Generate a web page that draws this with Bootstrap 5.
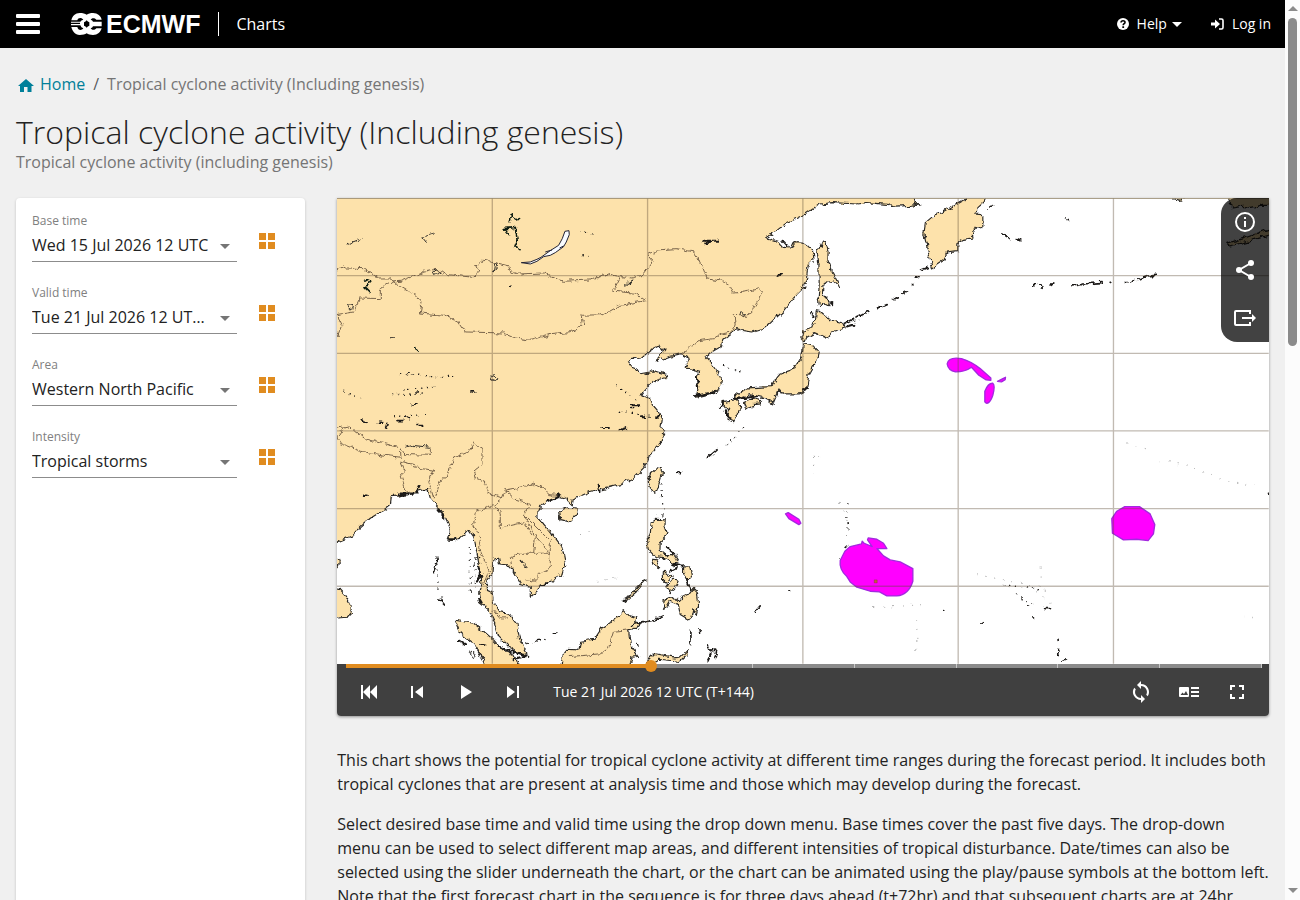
<!DOCTYPE html>
<html lang="en">
<head>
<meta charset="utf-8">
<meta name="viewport" content="width=device-width, initial-scale=1">
<title>Tropical cyclone activity (Including genesis) | ECMWF Charts</title>
<link rel="stylesheet" href="https://cdn.jsdelivr.net/npm/bootstrap@5.3.0/dist/css/bootstrap.min.css">
<style>
body{font-family:"Open Sans","Noto Sans",sans-serif;font-size:16px;line-height:24px;color:#222;background:#f0f0f0}
.shell{height:100vh}
.page{overflow:hidden auto;min-width:0;scrollbar-width:none}
.page::-webkit-scrollbar{display:none}
.topbar{height:48px;background:#000;padding:0 14px 0 16px}
.topbar a,.topbar button{color:#fff;text-decoration:none}
.topbar .btn{font-size:14px;line-height:24px;border:0;border-radius:0}
.logo-word{font:bold 25px/24px "Liberation Sans",Arial,sans-serif}
.app-name{border-left:1px solid #fff;padding-left:17px;margin-left:18px}
.crumbs{padding-top:24px;--bs-breadcrumb-divider-color:#757575;--bs-breadcrumb-item-active-color:#757575}
.crumbs .active{color:#757575}
.crumbs a{color:#007f99;text-decoration:none}
.page-title{font-size:32px;font-weight:300;line-height:40px;margin:16px 0 0}
.subtitle{color:#757575;line-height:20px;margin-bottom:26px}
.content-row{--bs-gutter-x:32px}
.filters{background:#fff;border-radius:4px 4px 0 0;padding:11px 16px;min-height:900px;box-shadow:0 1px 3px #0003}
.field{height:72px}
.field label{display:block;font-size:12px;line-height:24px;color:#808080}
.field select{appearance:none;display:block;width:100%;height:29px;padding:0 28px 4px 0;border:0;border-bottom:1px solid #8c8c8c;border-radius:0;color:#222;font:16px/24px "Open Sans","Noto Sans",sans-serif;text-overflow:ellipsis;overflow:hidden;white-space:nowrap;
background:#fff url("data:image/svg+xml,%3Csvg xmlns='http://www.w3.org/2000/svg' width='10' height='5'%3E%3Cpath d='M0 0h10L5 5z' fill='%23757575'/%3E%3C/svg%3E") no-repeat right 7px top 11px}
.select-box{flex:0 1 205px;min-width:0}
.grid-btn{width:32px;height:32px;margin:14px 0 0 14px}
.map-side{top:0;right:0;width:48px;background:#000000bd;border-radius:16px 0 0 16px}
.map-side .btn,.player .btn{width:48px;height:48px;padding:0;border:0;color:#fff;border-radius:0}
.viewer{box-shadow:0 1px 3px #0006;border-radius:0 0 4px 4px;overflow:hidden}
.viewer .chart{background:#fff;aspect-ratio:2}
.player{background:#404040;color:#fff;height:52px;font-size:14px}
.time-slider{appearance:none;display:block;width:calc(100% - 4px);height:4px;margin:0 1px 0 3px;background:none;position:relative}
.time-slider::-webkit-slider-runnable-track{height:4px;background:
linear-gradient(to right,#e08c20 33.33%,transparent 0) center/calc(100% - 12px) 4px no-repeat,
repeating-linear-gradient(to right,#8b8b8b 0 calc(100%/9 - 1px),#c8c8c8 calc(100%/9 - 1px) calc(100%/9)) center/calc(100% - 12px) 4px no-repeat}
.time-slider::-webkit-slider-thumb{appearance:none;width:12px;height:12px;margin-top:-4px;border-radius:50%;background:#e08c20}
.about{padding-top:32px}
.scroller{width:15px;background:#fcfcfc}
.scroll-thumb{width:9px;height:328px;background:#8b8b8b;border-radius:5px;margin-top:7px}
.tri{border:5px solid transparent}
.tri-up{border-bottom-color:#8b8b8b;border-top:0;margin-top:6px}
.tri-down{border-top-color:#8b8b8b;border-bottom:0;margin-bottom:7px}
</style>
</head>
<body>
<div class="shell d-flex overflow-hidden">
<div class="page flex-grow-1">
<header class="topbar d-flex align-items-center">
  <button class="btn p-0 me-4" type="button" aria-label="Menu"><svg class="d-block" width="24" height="20" fill="#fff"><rect width="24" height="4" rx="1"/><rect y="8" width="24" height="4" rx="1"/><rect y="16" width="24" height="4" rx="1"/></svg></button>
  <a class="d-flex align-items-center ms-2 ps-0" href="#" aria-label="ECMWF">
    <svg class="flex-shrink-0 me-1" style="margin-left:-1px" width="31" height="22" viewBox="0 0 93 66"><path d="M26 0C36 0 42 2 47 5C52 2 58 0 66 0C80 0 90 9 92 20H76C70 13 61 15 59 20Q65 21 66 26H92V40H66Q65 45 59 46C61 51 70 53 76 46H92C89 57 80 66 66 66C58 66 52 64 47 61C42 64 36 66 26 66C12 66 4 54 1 42H19C21 52 31 54 37 46Q30 44 28 37H0V33H27V29H0V26H28Q30 21 37 20C31 12 21 14 19 22H1C4 9 13 0 26 0ZM47 22Q44 27 39 28V38Q44 39 47 44Q50 39 55 38V28Q50 27 47 22Z" fill="#fff" fill-rule="evenodd"/></svg>
    <span class="logo-word">ECMWF</span></a>
  <a class="app-name" href="#">Charts</a>
  <button class="btn d-flex align-items-center ms-auto p-0" type="button"><svg class="me-2" width="12" height="12" viewBox="0 0 12 12"><circle cx="6" cy="6" r="6" fill="#fff"/><path d="M4 4.500C4.200 2 8.100 2.200 8 4.400C8 5.700 6.200 5.800 6.200 7.200M5.300 9.100h1.800" fill="none" stroke="#000" stroke-width="1.600"/></svg>Help<svg class="ms-1" width="12" height="5"><path d="M1 0h10L6 5z" fill="#fff"/></svg></button>
  <a class="btn d-flex align-items-center p-0 ms-4" href="#"><svg class="ms-1 me-2" width="13" height="12" viewBox="0 0 13 12"><path d="M0 4.500h4V1.500L9 6l-5 4.500v-3H0z" fill="#fff"/><path d="M8 1h2.500Q12 1 12 2.500v7Q12 11 10.500 11H8" fill="none" stroke="#fff" stroke-width="1.600"/></svg>Log in</a>
</header>

<main class="px-3">
  <nav class="crumbs" aria-label="breadcrumb"><ol class="breadcrumb mb-0">
    <li class="breadcrumb-item"><a class="d-flex align-items-center" href="#"><svg class="me-1" width="20" height="16" viewBox="0 0 20 16"><path d="M10 3L18 10H15.500V16H11.500V11H8V16H4V10H2Z" fill="#007f99"/></svg>Home</a></li>
    <li class="breadcrumb-item active" aria-current="page">Tropical cyclone activity (Including genesis)</li></ol></nav>
  <h1 class="page-title">Tropical cyclone activity (Including genesis)</h1>
  <p class="subtitle">Tropical cyclone activity (including genesis)</p>

  <div class="row content-row">
    <aside class="col-3"><form class="filters">
      <div class="field d-flex"><div class="select-box"><label for="base">Base time</label><select id="base"><option>Wed 15 Jul 2026 12 UTC</option></select></div><button class="btn p-0 border-0 grid-btn" type="button" aria-label="All base times"><svg width="16" height="16" fill="#e08c20"><path d="M0 0h7v7H0zM9 0h7v7H9zM0 9h7v7H0zM9 9h7v7H9z"/></svg></button></div>
      <div class="field d-flex"><div class="select-box"><label for="valid">Valid time</label><select id="valid"><option>Tue 21 Jul 2026 12 UTC (T+144)</option></select></div><button class="btn p-0 border-0 grid-btn" type="button" aria-label="All valid times"><svg width="16" height="16" fill="#e08c20"><path d="M0 0h7v7H0zM9 0h7v7H9zM0 9h7v7H0zM9 9h7v7H9z"/></svg></button></div>
      <div class="field d-flex"><div class="select-box"><label for="area">Area</label><select id="area"><option>Western North Pacific</option></select></div><button class="btn p-0 border-0 grid-btn" type="button" aria-label="All areas"><svg width="16" height="16" fill="#e08c20"><path d="M0 0h7v7H0zM9 0h7v7H9zM0 9h7v7H0zM9 9h7v7H9z"/></svg></button></div>
      <div class="field d-flex"><div class="select-box"><label for="intensity">Intensity</label><select id="intensity"><option>Tropical storms</option></select></div><button class="btn p-0 border-0 grid-btn" type="button" aria-label="All intensities"><svg width="16" height="16" fill="#e08c20"><path d="M0 0h7v7H0zM9 0h7v7H9zM0 9h7v7H0zM9 9h7v7H9z"/></svg></button></div>
    </form></aside>

    <section class="col-9">
      <div class="viewer position-relative">
        <svg class="chart d-block w-100" viewBox="0 0 2796 1398" role="img" aria-label="Map of the Western North Pacific">
          <defs><filter id="rough" x="0" y="0" width="2796" height="1398" filterUnits="userSpaceOnUse" color-interpolation-filters="sRGB"><feTurbulence type="fractalNoise" baseFrequency=".055" numOctaves="3" seed="4"/><feDisplacementMap in="SourceGraphic" scale="18" xChannelSelector="R" yChannelSelector="G"/></filter></defs>
          <g filter="url(#rough)" stroke-linejoin="round" stroke-linecap="round">
          <g fill="#fde2ab" stroke="#2b2925" stroke-width="3.500">
            <!-- mainland Asia -->
            <path d="M-20-20H1730L1739 15 1749 18 1720 22 1665 25 1659 20 1589 14 1559 18 1489 14 1449 18 1389 58 1349 75 1319 98 1289 120 1324 130 1339 148 1364 150 1371 134 1399 135 1414 145 1429 160 1431 185 1414 200 1409 240 1399 270 1379 290 1339 340 1284 390 1244 402 1219 398 1199 392 1179 410 1159 425 1154 445 1119 465 1104 478 1129 505 1149 535 1154 560 1144 578 1109 590 1079 598 1084 570 1079 540 1089 520 1059 512 1044 510 1057 480 1034 467 999 475 961 490 967 475 984 455 964 445 939 458 914 480 884 485 874 493 884 508 904 515 914 530 939 525 949 518 994 530 984 540 949 550 924 575 914 590 934 600 949 625 974 655 969 690 984 700 964 746 934 776 924 806 889 841 849 861 789 876 749 886 709 904 706 921 685 901 660 894 630 908 603 934 603 958 640 1001 675 1046 685 1096 675 1131 640 1151 615 1166 580 1198 580 1166 550 1156 530 1121 510 1101 488 1098 485 1084 468 1086 465 1126 450 1146 448 1176 465 1184 470 1216 485 1241 515 1246 540 1276 548 1326 570 1366 555 1371 515 1346 485 1316 470 1266 455 1236 428 1214 425 1186 435 1156 430 1116 420 1066 410 1016 395 996 385 1008 360 1028 330 1026 340 996 325 956 300 926 280 901 272 871 240 881 190 894 163 896 160 921 140 936 100 961 60 996 45 1014 5 1031-20 1056Z"/>
            <path d="M-20 1055Q15 1085 4 1105L-20 1130M-20 1170L10 1175 25 1192 42 1225 43 1245 30 1258-20 1262"/>
            <path d="M668 940L690 930 722 934 718 950 695 974 672 968ZM934 850L942 826 960 810 976 812 976 830 960 880 950 886 938 870Z"/>
            <!-- Sumatra and Borneo -->
            <path d="M353 1267L410 1276 440 1300 470 1326 490 1350 530 1370 550 1410H450L440 1386 410 1336 370 1306ZM672 1410L676 1370 690 1354 726 1356 731 1330 772 1324 795 1290 830 1268 862 1235 880 1254 900 1260 896 1272 915 1276 900 1290 875 1296 880 1340 905 1376 885 1378 875 1410ZM929 1390L950 1370 1010 1380 1030 1378 1053 1355 1050 1370 1028 1391 1000 1388 965 1384 940 1400Z"/>
            <!-- Philippines -->
            <path d="M943 970L955 964 985 966 984 984 990 1000 984 1016 970 1030 969 1056 985 1070 1010 1070 1023 1090 1018 1098 985 1080 955 1076 935 1056 928 1022 940 1010ZM944 1084L960 1086 968 1106 960 1112ZM979 1122L1003 1134 992 1152 980 1150ZM1040 1104L1058 1104 1064 1136 1050 1150 1040 1130ZM989 1168L1008 1144 1025 1146 1012 1176 1000 1184ZM1030 1202L1058 1188 1070 1172 1082 1186 1085 1220 1078 1250 1068 1232 1060 1268 1030 1250 1024 1220 1000 1210 985 1234 979 1230 986 1202 1010 1196 1022 1210ZM920 1150L928 1146 900 1180 864 1212 870 1200Z"/>
            <!-- Japan and Sakhalin -->
            <path d="M1439 150L1452 150 1460 132 1467 134 1474 160 1473 184 1486 220 1500 248 1508 266 1490 250 1474 248 1458 262 1457 290 1480 312 1478 324 1460 314 1448 325 1444 304 1447 260 1446 196ZM1438 338L1450 340 1480 366 1520 374 1525 390 1489 400 1474 420 1435 404 1410 418 1404 430 1395 418 1398 400 1428 390 1436 368ZM1400 438L1430 444 1444 466 1440 484 1431 504 1416 530 1412 556 1408 576 1384 588 1335 588 1326 576 1308 618 1284 600 1240 590 1190 608 1200 590 1232 570 1304 566 1320 540 1330 528 1374 512 1394 480ZM1220 614L1250 602 1274 608 1270 618 1248 620 1228 634ZM1155 614L1196 608 1212 626 1190 672 1170 664 1176 640Z"/>
            <!-- Kamchatka -->
            <path d="M1900-10L1876 10 1820 42 1794 50 1766 74 1761 108 1776 170 1787 210 1822 186 1830 162 1863 158 1863 134 1880 124 1912 120 1908 100 1916 86 1938 90 1938 50 1914 48 1924 28 1942 12 1946-10ZM2510 0L2530 4 2550-5M2675-10L2678 20 2690 30 2720 25 2745 28 2770 22 2810 22V-10ZM2670 136L2730 118 2800 92V110L2740 128 2680 144Z"/>
            <g fill="none">
              <path stroke="#0a1a10" stroke-width="5" d="M502 92L535 88 541 130 534 148 546 158M504 96L518 112M519 68L524 52 545 66M82 242L98 250 92 262 84 266 100 282M236 448L240 460"/>
              <path stroke-width="3" d="M255 118L290 108M255 120L268 136M30 138L75 122M287 222l10-8 12 10-16 7zM474 198l9-3-4 20-8 3zM460 535l12-5 12 10-8 8-14-5zM1210 344l16 4-10 12-8-9zM32 320l14 3-2 10-8-5zM864 262l20-16-4 10-12 8zM206 748L224 742 278 748M553 1090l18 16-8 4zM398 1364l10-4 10 18-8 6z"/>
            </g>
          </g>
          <!-- borders -->
          <path fill="none" stroke="#77634a" stroke-width="3" d="M0 215L20 204 30 210 80 212 125 240 155 240 165 252 190 250 225 236 260 220 290 214 335 230 410 238 425 225 416 205 440 184 515 204 520 220 545 228 620 225 650 240 680 250 760 246 810 228 850 236 885 240 915 232 948 188 934 170 960 156 1020 152 1070 162 1092 195 1110 240 1150 246 1180 265 1190 286 1235 280 1268 272 1276 282 1262 304 1250 335 1230 355 1192 352 1195 380 1185 402 1150 408 1130 422 1090 428 1060 448 1034 467M165 252L185 260 235 290 255 315 250 345 320 352 365 372 385 402 500 405 535 420 580 427 640 410 700 404 740 378 735 352 800 350 850 322 925 308 900 286 830 280 850 240M155 255L130 272 130 302 70 300 50 342 0 350 15 380 0 418M0 690L30 685 60 700 90 724 190 750 192 778 140 772 70 760 10 736 0 720 20 690M190 750L205 770 280 772 280 750M192 790L230 800 230 810 290 816 275 850 290 900M192 790L205 820 192 832 208 882M295 900L312 840 330 840 350 780 395 762 410 735 435 752 435 800 410 820 415 840 440 850 455 886 495 900 505 876 560 866 590 856 625 872 635 890 660 892M495 900L470 920 415 942 410 980 430 1020 425 1046 455 1120 440 1160M470 920L490 945 490 990 560 974 595 1020 590 1066 640 1066 600 1020 560 950 580 920 540 908 505 878M560 950L640 1030 640 1110 600 1130 600 1150 570 1146M525 1110L520 1080 545 1066 590 1066M470 1236L490 1260 515 1260M700 1376L790 1368 815 1350 830 1300 875 1296"/>
          </g>
          <!-- Lake Baikal -->
          <path fill="#f8fbff" stroke="#223" stroke-width="3" stroke-linejoin="round" d="M553 194L580 192 600 184 612 178 640 158 665 142 676 122 684 100 696 98 697 110 688 132 680 146 655 164 640 172 620 176 600 190 580 198ZM625 162l20-6M668 150l12-6"/>
          <!-- small islands and lakes -->
          <g filter="url(#rough)" fill="none" stroke="#1c1a18" stroke-linecap="round">
            <path stroke-width="6" d="M186 890h26M220 884h20l8-20M262 876l8-4M336 1024h20M302 934l18 18 2 12M425 1110l8 20-10 18M426 1200l8 14M300 1086l-6 20-4 18M310 1205l10 10M484 1346l60 20 30 14M530 1384l40-12M1158 616l-12 14M1166 640l12 24M1074 594l58-12M1190 604l70-8M1080 540l4 30M1398 574h12M966 652l-8 10M860 1210l6-6M610 1166l20-10M630 910l40-18M782 862l6 20M885 625h24M912 655h10M796 690h20M848 696l20-6M1112 780l28-24M1020 826h14M1100 128h42M1108 136l16-8M1340 130l14 16M1322 234l16-8M1486 312v10M1012 1100l24 6M1000 1120l20-10M1048 1140l12 34M990 1050l26 20"/>
            <path stroke-width="5" d="M1754 216l20-8M1738 240l12-6M1724 260h4M1698 286l8-4M1670 306l14-8M1620 332l28-12M1560 360l36-18M1526 376l24-12M1530 386l20-6M1956 30l14-8M1998 108l22 14M2040 122l12 4M2186 60h2M2194 68h2M2090 260h6M2106 262l10 6M2140 264l8-6M2206 264l28-4M2236 258l60-4M2320 256h2M2366 254h4M2380 252l16-4M2406 244l26-10 24-2M1270 1224l-12 14M1086 1296l2 10M1356 1176h2M890 1280l56-12 30-14M1114 1344l8 24-10 20M1120 1360l20-4-6 26M1424 344l8 12M900 1340l2 4M365 1330l20 12M432 1336l12 4M600 1328h8M652 1306l8-4M1062 1300v40M1506 1084l4-4M2792 886h3M1822 1237h2M1935 1273h2M2124 1232h14M2164 1324v4M2166 1354v22M2178 1390l8-4M2088 1260h2M2070 1224h2M1528 1046l4-4M1534 978v2M160 420h12M240 582h4M402 582h12M226 618h14M212 522h8M70 662l20 14M180 668h20M204 656l10 6M240 680h14M126 676h8M150 676l-4 14M80 892h10M520 262h-2"/>
            <path stroke-width="4" stroke-dasharray="1 17" d="M200 576L300 566M165 590L270 588M170 656L265 650M190 530l170 6M20 580l60 26M1160 500l60 30M730 100l50 10M735 170l30 10M840 560l60 50M850 640l120 20M975 860l4 100M960 950l20-2M1220 690l-60 60M400 1050v130M415 1080v100M428 1060v80M300 1080v100M570 1334l60-10M2000 1160l140 20M2040 1190l60 36M1530 920v100"/>
            <path stroke-width="3" stroke="#aaa" stroke-dasharray="1 26" d="M2370 738l60 16M2470 792l80 8 100 44 110 20M1510 916l20 60M1610 1226l60 4M1670 1226l90-6M1740 1270v90M2720 1250l30 14M780 1150l60-10M730 1010l40-10M1920 1130l150 30 80 60M2110 1110v60M1430 830v-70M1448 750v40"/>
          </g>
          <!-- cyclone probability areas -->
          <g fill="#f0f" stroke="#a329df" stroke-width="4" stroke-linejoin="round">
            <path d="M1831 498C1834 482 1850 478 1874 482C1895 488 1915 500 1930 512L1962 540 1962 547 1948 546 1926 532 1904 508C1890 518 1880 522 1856 522Q1834 518 1831 498ZM1944 580Q1954 555 1968 556Q1976 562 1968 592C1960 616 1950 620 1944 612ZM1982 550L1998 542 2006 538 2005 545 1994 552ZM1346 948L1354 944 1386 964 1392 976 1386 980 1356 962Z"/>
            <path d="M1510 1088L1524 1060 1540 1046 1574 1038 1576 1030 1582 1036 1606 1046 1592 1026 1594 1020 1620 1024 1640 1036 1650 1052 1620 1052 1640 1074 1660 1086 1690 1092 1728 1112V1150C1720 1176 1704 1192 1680 1194H1650L1628 1182 1600 1180 1560 1168 1540 1152 1530 1136C1512 1120 1508 1104 1510 1088Z"/>
            <path d="M2325 962L2340 940 2364 926H2408L2440 948 2454 980 2450 1008 2434 1028 2400 1024 2360 1026 2327 1006Z"/>
          </g>
          <path d="M1612 1146h9v9h-9z" fill="#c0603c" stroke="#733"/>
          <path d="M466 0V1398M932 0V1398M1398 0V1398M1864 0V1398M2330 0V1398M0 233H2796M0 466H2796M0 699H2796M0 932H2796M0 1165H2796" fill="none" stroke="#5b4a34" stroke-opacity=".38" stroke-width="4"/>
          <path d="M0 1H2796" stroke="#998c70" stroke-width="3"/>
        </svg>
        <div class="map-side position-absolute">
          <button class="btn d-flex align-items-center justify-content-center" type="button" aria-label="Information"><svg width="24" height="24" viewBox="0 0 24 24"><circle cx="12" cy="12" r="9" fill="none" stroke="currentColor" stroke-width="2"/><path d="M11 7h2v2h-2zM11 11h2v6h-2z" fill="currentColor"/></svg></button>
          <button class="btn d-flex align-items-center justify-content-center" type="button" aria-label="Share"><svg width="24" height="24" viewBox="0 0 24 24"><path d="M18 5L6 12l12 7" fill="none" stroke="currentColor" stroke-width="2"/><g fill="currentColor"><circle cx="18" cy="5" r="3"/><circle cx="6" cy="12" r="3"/><circle cx="18" cy="19" r="3"/></g></svg></button>
          <button class="btn d-flex align-items-center justify-content-center" type="button" aria-label="Export"><svg width="24" height="24" viewBox="0 0 24 24"><path d="M17 8V5H3q-1 0-1 1v12q0 1 1 1h14v-3M9 12h11" fill="none" stroke="currentColor" stroke-width="2"/><path d="M19 8l4 4-4 4z" fill="currentColor"/></svg></button>
        </div>
        <div class="player">
          <input class="time-slider" type="range" min="72" max="288" step="24" value="144" aria-label="Valid time step">
          <div class="d-flex align-items-center px-2">
            <button class="btn d-flex align-items-center justify-content-center" type="button" aria-label="First"><svg width="24" height="24" fill="currentColor"><path d="M4 5h2v14H4zM13 5v14l-7-7zM20 5v14l-7-7z"/></svg></button>
            <button class="btn d-flex align-items-center justify-content-center" type="button" aria-label="Previous"><svg width="24" height="24" fill="currentColor"><path d="M6 6h2v12H6zM18 6v12l-8-6z"/></svg></button>
            <button class="btn d-flex align-items-center justify-content-center" type="button" aria-label="Play"><svg width="24" height="24" fill="currentColor"><path d="M8 5v14l11-7z"/></svg></button>
            <button class="btn d-flex align-items-center justify-content-center" type="button" aria-label="Next"><svg width="24" height="24" fill="currentColor"><path d="M6 6v12l8-6zM16 6h2v12h-2z"/></svg></button>
            <span class="ms-3">Tue 21 Jul 2026 12 UTC (T+144)</span>
            <button class="btn d-flex align-items-center justify-content-center ms-auto" type="button" aria-label="Loop"><svg width="24" height="24" fill="currentColor"><path d="M12 4V1L8 5l4 4V6a6 6 0 0 1 5.250 8.800l1.500 1.500A8 8 0 0 0 12 4zM12 18a6 6 0 0 1-5.250-8.800l-1.500-1.500A8 8 0 0 0 12 20v3l4-4-4-4z"/></svg></button>
            <button class="btn d-flex align-items-center justify-content-center" type="button" aria-label="Legend"><svg width="24" height="24"><path d="M3 7h8q1 0 1 1v8q0 1-1 1H3q-1 0-1-1V8q0-1 1-1zM14 7h8v2h-8zM14 11h8v2h-8zM14 15h8v2h-8z" fill="currentColor"/><path d="M3.500 15l2-2.500 1.500 1.500 2-3 2 4z" fill="#404040"/></svg></button>
            <button class="btn d-flex align-items-center justify-content-center" type="button" aria-label="Full screen"><svg width="24" height="24" fill="currentColor"><path d="M5 5h5v2H7v3H5zM14 5h5v5h-2V7h-3zM5 14h2v3h3v2H5zM17 14h2v5h-5v-2h3z"/></svg></button>
          </div>
        </div>
      </div>
      <div class="about">
        <p>This chart shows the potential for tropical cyclone activity at different time ranges during the forecast period. It includes both tropical cyclones that are present at analysis time and those which may develop during the forecast.</p>
        <p>Select desired base time and valid time using the drop down menu. Base times cover the past five days. The drop-down menu can be used to select different map areas, and different intensities of tropical disturbance. Date/times can also be selected using the slider underneath the chart, or the chart can be animated using the play/pause symbols at the bottom left. Note that the first forecast chart in the sequence is for three days ahead (t+72hr) and that subsequent charts are at 24hr intervals.</p>
      </div>
    </section>
  </div>
</main>
</div>
<div class="scroller d-flex flex-column align-items-center flex-shrink-0" aria-hidden="true"><span class="tri tri-up"></span><span class="scroll-thumb"></span><span class="tri tri-down mt-auto"></span></div>
</div>
<script src="https://cdn.jsdelivr.net/npm/bootstrap@5.3.0/dist/js/bootstrap.bundle.min.js"></script>
</body>
</html>
